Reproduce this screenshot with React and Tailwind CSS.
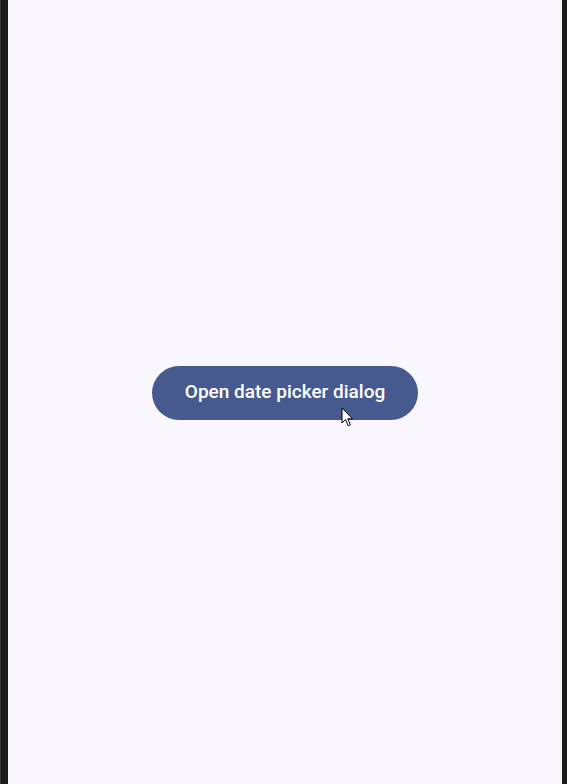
import React from 'react';

const Cursor = () => (
  <svg
    className="absolute left-[341px] top-[407px] pointer-events-none"
    width="14"
    height="21"
    viewBox="0 0 14 21"
  >
    <path
      d="M1 1 L1 16 L4.5 12.5 L7.2 18.8 L9.4 17.8 L6.8 11.8 L11.5 11.8 Z"
      fill="#ffffff"
      stroke="#000000"
      strokeWidth="1"
      strokeLinejoin="round"
    />
  </svg>
);

const App = () => {
  return (
    <div className="relative flex h-[784px] w-[567px] bg-[#1b1b1b] font-['Roboto',sans-serif]">
      <div className="w-px bg-[#3a3a3a]" />
      <div className="w-[7px]" />
      <main className="flex flex-1 items-center justify-center bg-[#f9f6fd]">
        <button
          type="button"
          className="mt-px h-[54px] w-[266px] rounded-full bg-[#475a8f] text-[19px] font-medium text-white"
        >
          Open date picker dialog
        </button>
      </main>
      <div className="w-[5px]" />
      <Cursor />
    </div>
  );
};

export default App;
